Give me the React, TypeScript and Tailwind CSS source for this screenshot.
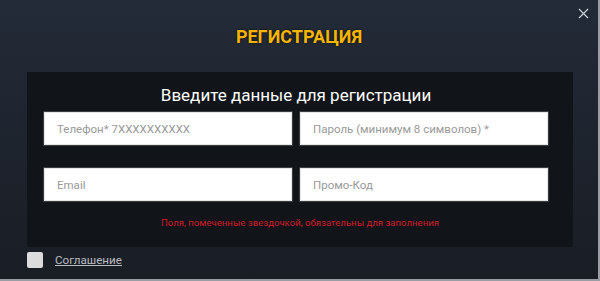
import { X } from "lucide-react";

const fields = [
  "Телефон* 7XXXXXXXXXX",
  "Пароль (минимум 8 символов) *",
  "Email",
  "Промо-Код",
];

export default function App() {
  return (
    <div
      className="relative h-[281px] w-[600px] overflow-hidden border-b-2 border-r-2 border-[#9a9ea4] bg-gradient-to-b from-[#232b38] to-[#191d24]"
      style={{ fontFamily: "Roboto, 'Liberation Sans', sans-serif" }}
    >
      <button className="absolute right-[6px] top-[5px] text-[#d3d7de]">
        <X size={17} strokeWidth={1.5} />
      </button>

      <h1 className="pt-[26px] text-center text-[18px] font-bold leading-[22px] text-[#f7b500] [text-shadow:0_0_2px_#000]">
        РЕГИСТРАЦИЯ
      </h1>

      <div className="ml-[27px] mt-[24px] h-[175px] w-[546px] bg-[#111418] pl-[16px] pr-[24px]">
        <p className="pt-[11px] text-center text-[17px] leading-[24px] text-white">
          Введите данные для регистрации
        </p>
        <div className="mt-[4px] grid grid-cols-2 gap-x-[6px] gap-y-[21px]">
          {fields.map((f) => (
            <input
              key={f}
              placeholder={f}
              className="h-[35px] w-full border border-[#3a3d42] bg-white px-[13px] text-[11.5px] text-[#333] shadow-[inset_0_0_0_1px_#e4e4e4] outline-none placeholder:text-[#9a9a9a]"
            />
          ))}
        </div>
        <p className="mt-[14px] pl-[8px] text-center text-[9.6px] leading-[14px] text-[#cc1d2b]">
          Поля, помеченные звездочкой, обязательны для заполнения
        </p>
      </div>

      <div className="ml-[27px] mt-[5px] flex items-center gap-[12px]">
        <span className="h-[16px] w-[16px] rounded-[2px] bg-[#dcdcdc]" />
        <a className="text-[11.6px] leading-[16px] text-[#b9bcc1] underline">
          Соглашение
        </a>
      </div>
    </div>
  );
}
